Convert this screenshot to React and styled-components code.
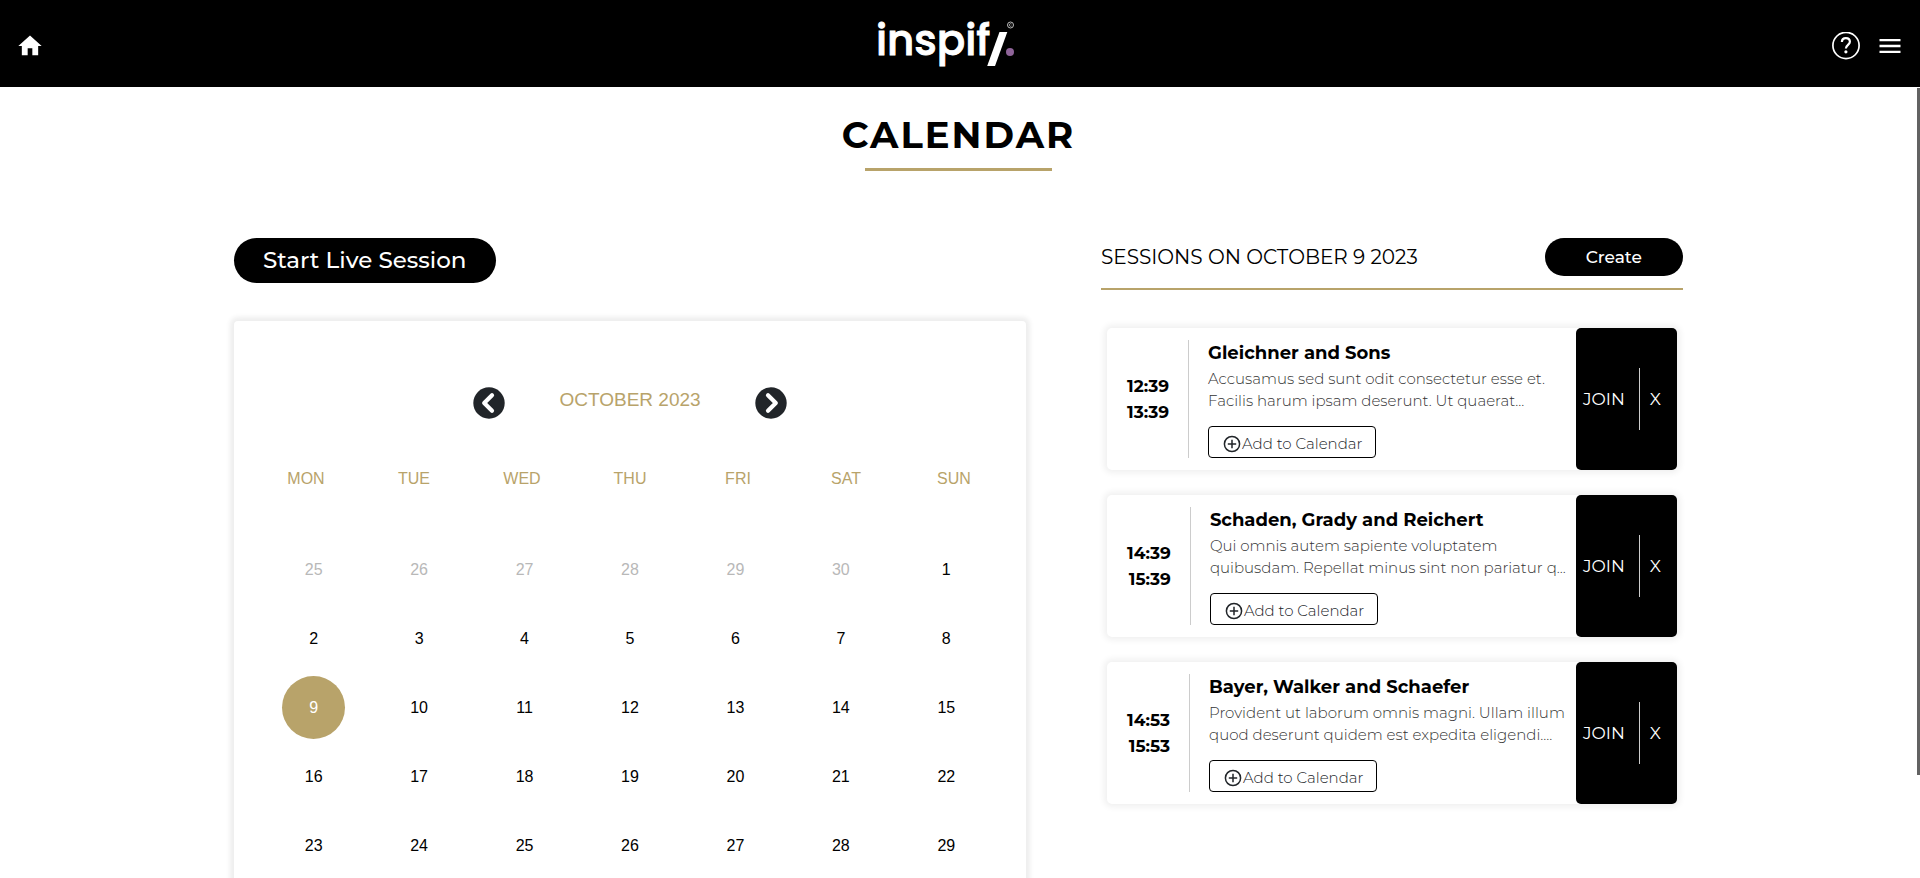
import React from "react";
import styled, { createGlobalStyle } from "styled-components";
import { MdHome, MdMenu } from "react-icons/md";

const GOLD = "#b8a36a";

const GlobalStyle = createGlobalStyle`
  * { box-sizing: border-box; }
  body {
    margin: 0;
    background: #fff;
    color: #000;
    font-family: Montserrat, Inter, "Open Sans", sans-serif;
  }
  button { font-family: inherit; cursor: pointer; }
`;

const Page = styled.div`
  display: flex;
  flex-direction: column;
  height: 100vh;
`;

const Header = styled.header`
  flex: none;
  display: grid;
  grid-template-columns: 1fr auto 1fr;
  align-items: center;
  height: 87px;
  padding: 0 16px;
  background: #000;
  color: #fff;
`;

const HeaderGroup = styled.nav`
  display: flex;
  align-items: center;
  justify-content: ${(p) => (p.$end ? "flex-end" : "flex-start")};
  gap: 16px;
  padding-top: 4px;
`;

const HomeLink = styled.a`
  display: flex;
  color: inherit;
`;

const IconButton = styled.button`
  display: flex;
  padding: 0;
  border: 0;
  background: none;
  color: ${(p) => p.$color || "inherit"};
`;

const LogoLink = styled.a`
  display: flex;
  padding-right: 28px;
`;

const Viewport = styled.div`
  flex: 1;
  min-height: 0;
  display: flex;
`;

const Main = styled.main`
  flex: 1;
  min-width: 0;
  overflow-y: auto;
  scrollbar-width: none;
`;

const ScrollTrack = styled.div`
  flex: none;
  width: 3px;
  padding-top: 1px;
  background: #fff;
`;

const ScrollThumb = styled.div`
  height: 87%;
  background: #626262;
`;

const Title = styled.h1`
  width: fit-content;
  margin: 24px auto 0;
  font-size: 37px;
  line-height: 48px;
  font-weight: 700;
  letter-spacing: 2px;
`;

const TitleRule = styled.hr`
  width: 187px;
  height: 3px;
  margin: 9px auto 67px;
  border: 0;
  background: ${GOLD};
`;

const Columns = styled.div`
  display: grid;
  grid-template-columns: minmax(0, 792fr) minmax(0, 582fr);
  gap: 75px;
  align-items: start;
  padding: 0 234px 30px;
`;

const PillButton = styled.button`
  height: ${(p) => (p.$large ? 45 : 38)}px;
  padding: 0 ${(p) => (p.$large ? 29 : 41)}px 1px;
  border: 0;
  border-radius: 23px;
  background: #000;
  color: #fff;
  font-size: ${(p) => (p.$large ? 23 : 17)}px;
  font-weight: 500;
  white-space: nowrap;
`;

const CalendarCard = styled.section`
  margin-top: 38px;
  padding: 66px 18px 18px;
  border-radius: 4px;
  background: #fff;
  box-shadow: 0 0 5px 4px #eee;
`;

const MonthNav = styled.div`
  display: flex;
  justify-content: center;
  gap: 54px;
  font-family: "Liberation Sans", Arial, sans-serif;
`;

const MonthName = styled.h2`
  margin: 0;
  font-size: 19px;
  line-height: 26px;
  font-weight: 400;
  color: ${GOLD};
`;

const MonthTable = styled.table`
  display: block;
  margin-top: 48px;
  font: 16px/24px "Liberation Sans", Arial, sans-serif;
`;

const WeekdayHead = styled.thead`
  display: block;
  margin-bottom: 44px;
  color: ${GOLD};
`;

const DayBody = styled.tbody`
  display: block;
  padding: 0 9px;
`;

const WeekRow = styled.tr`
  display: grid;
  grid-template-columns: repeat(7, 1fr);
`;

const Weekday = styled.th`
  padding: 0;
  font-weight: 400;
  text-align: center;
`;

const DayCell = styled.td`
  display: flex;
  align-items: center;
  justify-content: center;
  height: 69px;
  padding: 0;
`;

const DayButton = styled.button`
  width: 63px;
  height: 63px;
  padding: 0;
  border: 0;
  border-radius: 50%;
  font-size: 16px;
  background: ${(p) => (p.$selected ? GOLD : "transparent")};
  color: ${(p) => (p.$selected ? "#fff" : p.$outside ? "#b8b8b8" : "#000")};
`;

const SessionsHead = styled.div`
  display: flex;
  justify-content: space-between;
  align-items: center;
  padding-bottom: 12px;
  border-bottom: 2px solid ${GOLD};
`;

const SessionsTitle = styled.h2`
  margin: 0;
  font-size: 20px;
  line-height: 24px;
  font-weight: 400;
`;

const SessionList = styled.ul`
  display: flex;
  flex-direction: column;
  gap: 25px;
  margin: 38px 6px 0;
  padding: 0;
  list-style: none;
`;

const SessionCard = styled.li`
  display: flex;
  height: 142px;
  border-radius: 5px;
  background: #fff;
  box-shadow: 0 0 6px 3px #f0f0f0;
`;

const Times = styled.div`
  flex: none;
  display: flex;
  flex-direction: column;
  justify-content: center;
  margin: 12px 0;
  padding: 0 19px 0 20px;
  border-right: 1px solid #ccc;
  font-size: 17px;
  line-height: 26px;
  font-weight: 700;
  text-align: right;
`;

const Details = styled.div`
  flex: 1;
  min-width: 0;
  padding: 13px 0 0 19px;
  white-space: nowrap;
`;

const SessionName = styled.h3`
  margin: 0;
  font-size: 18px;
  line-height: 25px;
  font-weight: 700;
`;

const Description = styled.p`
  margin: 0;
  padding-top: 2px;
  font-size: 15px;
  line-height: 22px;
  font-weight: 300;
  color: #333;
`;

const AddButton = styled.button`
  display: flex;
  align-items: center;
  gap: 1px;
  height: 32px;
  margin-top: 14px;
  padding: 3px 13px 0 14px;
  border: 1px solid #000;
  border-radius: 4px;
  background: #fff;
  color: #212529;
  font-size: 15px;
  font-weight: 300;
`;

const Actions = styled.div`
  flex: none;
  display: flex;
  align-items: center;
  width: 101px;
  border-radius: 5px;
  background: #000;
`;

const ActionButton = styled.button`
  height: 62px;
  padding: 0 ${(p) => (p.$divided ? 14 : 10)}px 0 ${(p) => (p.$divided ? 7 : 10)}px;
  border: 0;
  border-right: ${(p) => (p.$divided ? "1px solid #ccc" : "0")};
  background: none;
  color: #fff;
  font-size: 17px;
`;

function Logo() {
  return (
    <svg width="140" height="72" viewBox="0 0 140 72" role="img" aria-label="inspify">
      <text
        x="0"
        y="47"
        fill="#fff"
        stroke="#fff"
        strokeWidth="0.900"
        fontFamily="Poppins, Inter, sans-serif"
        fontSize="42"
        fontWeight="500"
      >
        inspif
      </text>
      <path d="M123.500 24h7.800L119 58h-7.800z" fill="#fff" />
      <circle cx="134" cy="44" r="4" fill="#8f6499" />
      <circle cx="134.500" cy="17" r="3" fill="none" stroke="#bbb" strokeWidth="1" />
      <path d="M135.500 16a1.300 1.300 0 1 0 0 2" fill="none" stroke="#bbb" strokeWidth="0.800" />
    </svg>
  );
}

function HelpIcon() {
  return (
    <svg width="28" height="28" viewBox="0 0 28 28" fill="none" stroke="currentColor">
      <circle cx="14" cy="13.500" r="13.100" strokeWidth="1.700" />
      <path d="M9.900 10.100c0-2.500 1.700-4 4-4s4 1.500 4 3.600c0 3-4 3.300-4 6.800" strokeWidth="2.200" />
      <circle cx="13.900" cy="19.800" r="1.600" fill="currentColor" stroke="none" />
    </svg>
  );
}

function ChevronCircle({ d }) {
  return (
    <svg width="32" height="32" viewBox="0 0 32 32">
      <circle cx="16" cy="16" r="15.700" fill="currentColor" />
      <path d={d} fill="none" stroke="#fff" strokeWidth="4.200" strokeLinecap="round" strokeLinejoin="round" />
    </svg>
  );
}

function PlusCircle() {
  return (
    <svg width="18" height="18" viewBox="0 0 18 18" fill="none" stroke="currentColor" strokeWidth="1.500">
      <circle cx="9" cy="9" r="7.600" />
      <path d="M9 4.800v8.400M4.800 9h8.400" />
    </svg>
  );
}

const WEEKDAYS = ["MON", "TUE", "WED", "THU", "FRI", "SAT", "SUN"];

const WEEKS = [
  [25, 26, 27, 28, 29, 30, 1],
  [2, 3, 4, 5, 6, 7, 8],
  [9, 10, 11, 12, 13, 14, 15],
  [16, 17, 18, 19, 20, 21, 22],
  [23, 24, 25, 26, 27, 28, 29],
  [30, 31, 1, 2, 3, 4, 5],
];

const SESSIONS = [
  {
    start: "12:39",
    end: "13:39",
    name: "Gleichner and Sons",
    lines: ["Accusamus sed sunt odit consectetur esse et.", "Facilis harum ipsam deserunt. Ut quaerat..."],
  },
  {
    start: "14:39",
    end: "15:39",
    name: "Schaden, Grady and Reichert",
    lines: ["Qui omnis autem sapiente voluptatem", "quibusdam. Repellat minus sint non pariatur q..."],
  },
  {
    start: "14:53",
    end: "15:53",
    name: "Bayer, Walker and Schaefer",
    lines: ["Provident ut laborum omnis magni. Ullam illum", "quod deserunt quidem est expedita eligendi...."],
  },
];

function isOutside(week, day) {
  return (week === 0 && day > 7) || (week === 5 && day < 7);
}

function Calendar() {
  return (
    <CalendarCard>
      <MonthNav>
        <IconButton $color="#212529" aria-label="Previous month">
          <ChevronCircle d="M19 8.200L11.200 16L19 23.800" />
        </IconButton>
        <MonthName>OCTOBER 2023</MonthName>
        <IconButton $color="#212529" aria-label="Next month">
          <ChevronCircle d="M13 8.200L20.800 16L13 23.800" />
        </IconButton>
      </MonthNav>
      <MonthTable>
        <WeekdayHead>
          <WeekRow>
            {WEEKDAYS.map((d) => (
              <Weekday key={d} scope="col">{d}</Weekday>
            ))}
          </WeekRow>
        </WeekdayHead>
        <DayBody>
          {WEEKS.map((week, w) => (
            <WeekRow key={w}>
              {week.map((day) => (
                <DayCell key={day}>
                  <DayButton $outside={isOutside(w, day)} $selected={w === 2 && day === 9}>
                    {day}
                  </DayButton>
                </DayCell>
              ))}
            </WeekRow>
          ))}
        </DayBody>
      </MonthTable>
    </CalendarCard>
  );
}

function Session({ session }) {
  return (
    <SessionCard>
      <Times>
        <time>{session.start}</time>
        <time>{session.end}</time>
      </Times>
      <Details>
        <SessionName>{session.name}</SessionName>
        <Description>
          {session.lines[0]}
          <br />
          {session.lines[1]}
        </Description>
        <AddButton>
          <PlusCircle />
          Add to Calendar
        </AddButton>
      </Details>
      <Actions>
        <ActionButton $divided>JOIN</ActionButton>
        <ActionButton>X</ActionButton>
      </Actions>
    </SessionCard>
  );
}

export default function App() {
  return (
    <Page>
      <GlobalStyle />
      <Header>
        <HeaderGroup>
          <HomeLink href="#home" aria-label="Home">
            <MdHome size={28} />
          </HomeLink>
        </HeaderGroup>
        <LogoLink href="#home">
          <Logo />
        </LogoLink>
        <HeaderGroup $end>
          <IconButton aria-label="Help">
            <HelpIcon />
          </IconButton>
          <IconButton aria-label="Menu">
            <MdMenu size={28} />
          </IconButton>
        </HeaderGroup>
      </Header>
      <Viewport>
        <Main>
          <Title>CALENDAR</Title>
          <TitleRule />
          <Columns>
            <div>
              <PillButton $large>Start Live Session</PillButton>
              <Calendar />
            </div>
            <section>
              <SessionsHead>
                <SessionsTitle>SESSIONS ON OCTOBER 9 2023</SessionsTitle>
                <PillButton>Create</PillButton>
              </SessionsHead>
              <SessionList>
                {SESSIONS.map((s) => (
                  <Session key={s.name} session={s} />
                ))}
              </SessionList>
            </section>
          </Columns>
        </Main>
        <ScrollTrack aria-hidden="true">
          <ScrollThumb />
        </ScrollTrack>
      </Viewport>
    </Page>
  );
}
